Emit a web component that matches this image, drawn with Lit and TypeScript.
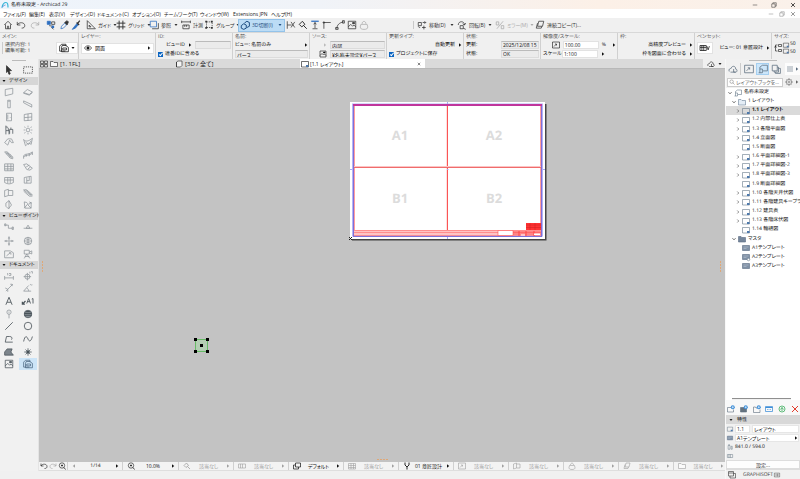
import { LitElement, html, css, svg, nothing, TemplateResult } from "lit";
import { customElement, property } from "lit/decorators.js";
import { classMap } from "lit/directives/class-map.js";

/* Line icons on a 16 x 16 grid; "fill" paths are solid, the rest are stroked. */
const ICONS: Record<string, TemplateResult> = {
  logo: svg`<path d="M2 13C3 7 6 3 10 3c3 0 4 3 4 10" stroke="#38b6d8" stroke-width="2.4"/><path d="M2 13c2-3 4-4 7-5" stroke="#4a7fd0" stroke-width="1.6"/>`,
  home: svg`<path d="M2 8l6-6 6 6M4 7v7h8V7M7 14v-4h2v4"/>`,
  undo: svg`<path d="M2 3v5h5M2 8c2-5 12-5 12 1 0 3-2 4-5 4"/>`,
  redo: svg`<path d="M14 3v5H9M14 8C12 3 2 3 2 9c0 3 2 4 5 4"/>`,
  pick: svg`<path d="M2 2h5v5H2z" fill="#2e6fc0" stroke="#2e6fc0"/><path d="M9 3h5v4H9zM5 9l6 1-2 2 3 3"/><path d="M9 9h4v4H9z" fill="#2e6fc0" stroke="none"/>`,
  dropper: svg`<path d="M3 14l1-4 5-5 3 3-5 5z" stroke="#2e6fc0"/><path d="M9 4l4 4 2-5-2-2z" fill="currentColor"/>`,
  syringe: svg`<path d="M2 15l3-4 5-6 2 2-5 6z" fill="#2e6fc0" stroke="#2e6fc0"/><path d="M9 4l4 4M11 5l3-4" stroke-width="2"/>`,
  triangle: svg`<path d="M2 1v13h13zM5 8v3h3z"/>`,
  grid: svg`<path d="M5 1v14M11 1v14M1 5h14M1 11h14" stroke-width="1.5"/>`,
  trace: svg`<path d="M2 2h10v9H2z" stroke="#2e6fc0"/><path d="M5 14h10V5" />`,
  measure: svg`<path d="M1 3h14M1 1v4M15 1v4M3 8h10v6H3zM6 8v3M9 8v3"/>`,
  group: svg`<path d="M4 3h9v9H4z" stroke-dasharray="2 1.5"/><path d="M2 1h3v3H2zM11 1h3v3h-3zM2 11h3v3H2zM11 11h3v3h-3z" fill="currentColor" stroke="none"/>`,
  cube: svg`<path d="M2 9l4-3 4 2v5l-4 2-4-2zM7 5l4-3 4 2v6l-4 2" stroke-width="1.6"/>`,
  trim: svg`<path d="M2 2v12M2 8h7M8 3l6 9M14 3L8 12"/>`,
  find: svg`<path d="M2 7l5-5 4 5-5 4zM9 9l5 5" stroke-width="1.6"/>`,
  ibeam: svg`<path d="M2 2h12" stroke="#2e6fc0" stroke-width="2"/><path d="M8 4v9M4 14h8M6 7l2-3 2 3"/>`,
  corner: svg`<path d="M3 14V4h11M1 4h4M3 2v4"/>`,
  arc: svg`<path d="M3 14C3 8 7 4 14 3M1 12h4v3H1zM12 1h3v4h-3z"/>`,
  image: svg`<path d="M2 2h12v12H2zM2 11l4-4 3 3 2-2 3 3"/><path d="M9 4h3v2H9z" fill="currentColor"/>`,
  bag: svg`<path d="M5 6c0-5 6-5 6 0M3 7h10l1 4c0 3-2 4-6 4s-6-1-6-4z"/>`,
  move: svg`<path d="M2 4h5v5H2zM8 12h6M11 9v6M5 12c-3 0-3-2-3-2" /><path d="M9 4h5M12 2l2 2-2 2"/>`,
  rotate: svg`<path d="M2 8c0-7 10-7 10 0M12 8l-3-2M12 8l2-3M5 9h5v5H5z"/><path d="M10 13l4 2"/>`,
  mirror: svg`<path d="M3 14L13 2M2 3h4v5H2zM10 9h4v5h-4z"/>`,
  copies: svg`<path d="M6 2h8l-2 8H4zM4 5L2 13h8l1-3"/>`,
  sheet: svg`<path d="M1 3h14v11H1z"/><path d="M10 10h5v4h-5z" fill="#4d79ad" stroke="none"/>`,
  sheetTool: svg`<path d="M1 5l3-3h7v3M1 5v8h9M5 4h6l4 3v7H4V7zM6 8h6v3H6z"/>`,
  eye: svg`<path d="M1 8c3-6 11-6 14 0-3 6-11 6-14 0z"/><circle cx="8" cy="8" r="2.4" fill="currentColor"/>`,
  folder: svg`<path d="M1 13V3h5l2 2h7v8z" fill="#fafafa"/>`,
  folderFull: svg`<path d="M1 14V3h5l2 2h7v9z" fill="#75869b" stroke="#5a6c83"/>`,
  folderBlue: svg`<path d="M1 14V3h5l2 2h7v9z" fill="#e4edf6" stroke="#6b8199"/>`,
  master: svg`<path d="M1 3h14v10H1z" fill="#7f91a6" stroke="#5a6c83"/><path d="M3 6h10M3 9h6" stroke="#b9c5d2"/>`,
  masterLinked: svg`<path d="M1 3h14v10H1z" fill="#7f91a6" stroke="#5a6c83"/><path d="M3 6h10M3 9h6" stroke="#b9c5d2"/><circle cx="13" cy="13" r="2.500" fill="#fff"/>`,
  quad: svg`<path d="M1 2h6v5H1zM9 2h6v5H9zM1 9h6v5H1zM9 9h6v5H9z"/>`,
  box: svg`<path d="M3 4l3-2h8v9l-3 3H3zM3 4v10" fill="#f4f4f4"/>`,
  cloud: svg`<path d="M2 12c-2-4 2-5 3-5 1-5 8-4 7 1 3 0 3 4 1 5H4"/><path d="M9 8v5h3"/>`,
  frame: svg`<path d="M1 2h14v12H1zM4 11l5-5M6 6h3v3" />`,
  pen: svg`<path d="M0 4h10v8H0zM0 7h10M3 4v8M6 4v8M11 5l2 6 2-6"/>`,
  link: svg`<path d="M7 2H3v12h4M1 7l2-3 2 3M9 1h6v4H9zM9 11h6v4H9z"/>`,
  cursor: svg`<path d="M4 1l8 8H8l2 5-2 1-2-5-2 2z" fill="currentColor"/>`,
  marquee: svg`<path d="M1 3h14v10H1z" stroke-dasharray="2 1.4"/>`,
  wall: svg`<path d="M2 4l12-2v9L2 14z"/>`,
  slab: svg`<path d="M1 9l6-5 8 4-5 4zM1 9v1l9 3 5-4"/>`,
  column: svg`<path d="M6 2h4v12H6zM6 3c1 1 3 1 4 0"/>`,
  beam: svg`<path d="M1 3l13 6v4L1 6z"/>`,
  door: svg`<path d="M4 2h8v12H4zM6 4v8M10 8v1"/>`,
  window: svg`<path d="M2 4l12-2v11L2 14zM8 3v11M2 9l12-1"/>`,
  chair: svg`<path d="M3 1v8h5v6M3 9v6M3 3c4 0 4 2 4 6M9 7h5v7M9 7v7M11 4v3"/>`,
  lamp: svg`<circle cx="8" cy="8" r="3"/><path d="M8 1v2M8 13v2M1 8h2M13 8h2M2 3l2 1M14 3l-2 1M2 13l2-1M14 13l-2-1"/>`,
  roof: svg`<path d="M1 9l5-6h6l3 6h-3l-3-4-3 8z"/>`,
  shell: svg`<path d="M1 4c3 4 8 3 14-2l-2 10c-4-4-5-1-9 2zM4 8l5 4 4-6"/>`,
  stair: svg`<path d="M1 3h4l9 8v3l-4-1zM4 3l8 9M3 6h5M6 8h5M8 11h5"/>`,
  rail: svg`<path d="M1 9c3-4 9-1 14-6M1 9v5M5 7v4M10 6v4M15 3v5M1 11c3-4 9-1 14-6"/>`,
  curtain: svg`<path d="M1 3h14v11H1zM6 3v11M11 3v11M1 7h14M1 11h14"/>`,
  mesh: svg`<path d="M1 4l5-1 9 7-4 3-5-1zM5 8l5-3M8 11l4-3"/>`,
  skylight: svg`<path d="M1 4h14v8c-5 3-9 3-14 0zM6 4v9M10 4v9M1 8h14"/>`,
  opening: svg`<path d="M2 4l11-2v11H2zM6 4v9M10 3v6H6"/>`,
  zone: svg`<path d="M1 4l6-2v10l-6 2zM7 4h7v8H7"/>`,
  ramp: svg`<path d="M1 3h5l9 8h-4zM4 3l9 8M1 5l9 8h5"/>`,
  morph: svg`<path d="M8 1L3 5v5l4 4 5-6zM8 1v13"/>`,
  object: svg`<path d="M2 3l4 1 3 3 4-3v9H3zM2 13l5-6 6 6M10 3l4 2"/>`,
  section: svg`<path d="M2 5h5v5h7M1 3h2v3H1zM13 8h2v4h-2z"/>`,
  elevation: svg`<path d="M1 10h14M5 10l3-5 3 5z"/>`,
  interior: svg`<circle cx="8" cy="8" r="2"/><path d="M8 1l-1 3h2zM8 15l-1-3h2zM1 8l3-1v2zM15 8l-3-1v2z"/>`,
  globe: svg`<circle cx="8" cy="8" r="6"/><path d="M2 8h12M8 2v12M4 4c3 2 5 2 8 0M4 12c3-2 5-2 8 0"/>`,
  detail: svg`<path d="M1 3h9l5 3v8H1zM4 11l6-5M8 6h3v3"/>`,
  camera: svg`<path d="M2 2h8v6H2zM10 5l4-2v5l-4-2M6 8l-4 7M6 8l5 7M3 12h7"/>`,
  dim: svg`<path d="M1 11h14M1 8v6M15 8v6M5 4h1v3M8 4h3v3H8"/>`,
  level: svg`<circle cx="7" cy="9" r="4"/><path d="M7 3v12M1 9h12M11 1v3M13 1h2v3"/>`,
  radial: svg`<path d="M2 8l4 2 8-8M6 10v4M6 10l-3 3M10 2h3v3"/>`,
  angle: svg`<path d="M1 13h12M1 13l8-9M6 8c2 1 3 3 3 5M11 3c2-2 3 2 4 0"/>`,
  textA: svg`<path d="M3 14L8 2l5 12M5 10h6" stroke-width="1.4"/>`,
  label: svg`<path d="M-1 13l5-5M-1 9v4h4" stroke-width="2"/><path d="M6 12l3-8 3 8M7 9h4M14 5l2-1v8" stroke-width="1.4"/>`,
  pin: svg`<circle cx="8" cy="5" r="3.4"/><path d="M8 8v7M7 5h2"/>`,
  hatch: svg`<circle cx="8" cy="8" r="6" fill="#8a9299"/><path d="M2 7h12M2 10h12M5 4h6" stroke-width="1.8"/>`,
  line: svg`<path d="M2 14L14 2" stroke-width="1.3"/>`,
  circle: svg`<circle cx="8" cy="8" r="6" stroke-width="1.3"/>`,
  poly: svg`<path d="M14 13H2l2-9h5c3 0 5 2 3 5" stroke-width="1.3"/>`,
  spline: svg`<path d="M1 12C3 2 6 3 8 8s5 4 7-4" stroke-width="1.3"/>`,
  fill: svg`<path d="M1 13V8l4-5h8l-2 5 4 5z" fill="#7d858c"/>`,
  star: svg`<path d="M8 2v12M2 8h12M4 4l8 8M12 4l-8 8"/><circle cx="8" cy="8" r="2" fill="currentColor"/>`,
  search: svg`<circle cx="7" cy="7" r="4.6"/><path d="M10 10l5 5"/>`,
  zoomIn: svg`<circle cx="8" cy="7" r="5.4"/><path d="M12 11l3 4M8 5v4M6 7h4" stroke-width="1.5"/>`,
  gear: svg`<circle cx="8" cy="8" r="5.4"/><circle cx="8" cy="8" r="2"/><path d="M8 0v3M8 13v3M0 8h3M13 8h3M3 3l1 1M13 3l-1 1M3 13l1-1M13 13l-1-1"/>`,
  menu: svg`<path d="M2 4h12M2 8h12M2 12h12"/>`,
  pages: svg`<path d="M2 2h8v9H2zM5 11v2h7V5h-2M7 13v2h8V7h-3"/>`,
  book: svg`<path d="M3 14V5l4-3h8v9H8M1 14h6V8H3"/>`,
  addSheet: svg`<path d="M1 5h8M1 5v9h12V9"/><circle cx="11.500" cy="4.500" r="4" fill="#3f8fd8" stroke="none"/><path d="M9.500 4.500h4M11.500 2.500v4" stroke="#fff"/>`,
  addMaster: svg`<path d="M1 5h12v9H1z" fill="#64727f"/><circle cx="11.500" cy="4.500" r="4" fill="#3f8fd8" stroke="none"/><path d="M9.500 4.500h4M11.500 2.500v4" stroke="#fff"/>`,
  addFolder: svg`<path d="M8 6H6L5 4H1v11h13V9"/><circle cx="11.500" cy="4.500" r="4" fill="#3f8fd8" stroke="none"/><path d="M9.500 4.500h4M11.500 2.500v4" stroke="#fff"/>`,
  card: svg`<path d="M1 3h14v10H1z" stroke="#3f8fd8" stroke-width="1.5"/><path d="M1 5h14" stroke="#3f8fd8" stroke-width="2"/><path d="M4 9h3M9 9h3" stroke="#3f8fd8"/>`,
  refresh: svg`<circle cx="8" cy="8" r="6" stroke="#3fae60" stroke-width="1.6"/><path d="M5 9l3-4 3 4M8 5v7" stroke="#3fae60" stroke-width="1.6"/>`,
  cross: svg`<path d="M2 2l12 12M14 2L2 14" stroke="#e23c2c" stroke-width="2"/>`,
  size: svg`<path d="M3 4h5v10H3zM3 2h5M11 6h3v8h-3z"/>`,
  split: svg`<path d="M1 4h14v8H1zM5 4v8M9 4v8"/>`,
  windows: svg`<path d="M1 1h10v9H1zM4 10v4h11V5h-4M1 4h10"/>`,
  badge: svg`<path d="M1 3h14v10H1zM5 6v4M8 6v4h2c2 0 2-4 0-4z"/>`,
  layers: svg`<path d="M5 2h10v8H5zM1 6v8h10v-4M5 6H1" stroke-width="1.4"/>`,
  forkPen: svg`<path d="M4 1v5l4 4 4-4V1M8 10v5" stroke-width="1.8"/>`,
  min: svg`<path d="M2 8h12"/>`,
  restore: svg`<path d="M2 5h9v9H2zM5 5V2h9v9h-3"/>`,
  close: svg`<path d="M3 3l10 10M13 3L3 13" stroke-width="2"/>`,
  down: svg`<path d="M2 4h12l-6 8z" fill="currentColor" stroke="none"/>`,
  right: svg`<path d="M4 1l9 7-9 7z" fill="currentColor" stroke="none"/>`,
  left: svg`<path d="M12 1L3 8l9 7z" fill="currentColor" stroke="none"/>`,
  chevR: svg`<path d="M5 2l6 6-6 6" stroke-width="2.4"/>`,
  chevD: svg`<path d="M2 5l6 6 6-6" stroke-width="3.4"/>`,
};

const iconStyles = css`
  svg.i { display: block; flex: none; width: 10px; height: 10px; fill: none; stroke: currentColor; stroke-width: 1.2; overflow: visible; }
  svg.i.s4 { width: 4px; height: 4px; }
  svg.i.s6 { width: 6px; height: 6px; }
  svg.i.s8 { width: 8px; height: 8px; }
`;
const ic = (name: string, size = 10) =>
  html`<svg class="i s${size}" viewBox="0 0 16 16" aria-hidden="true">${ICONS[name]}</svg>`;

const base = css`
  * { box-sizing: border-box; }
  button, input, select { font: inherit; color: inherit; margin: 0; padding: 0; border: 0; background: none; border-radius: 0; min-width: 0; outline: 0; }
  button { display: flex; align-items: center; white-space: nowrap; }
  select { appearance: none; }
  input[type="checkbox"] { appearance: none; flex: none; width: 5px; height: 5px; background: #0a64c2; display: grid; place-items: center; }
  input[type="checkbox"]::after { content: ""; width: 1px; height: 3px; border-right: 1px solid #fff; border-bottom: 1px solid #fff; transform: rotate(40deg); }
`;

@customElement("title-bar")
class TitleBar extends LitElement {
  static styles = [base, iconStyles, css`
    :host { display: block; flex: none; }
    .title { display: flex; align-items: center; height: 9px; padding: 0 3px 0 1px; gap: 2px; background: linear-gradient(90deg, #eef4fb, #f0f3f8 40%, #fcf0e7 75%, #faf1ea); color: #111; }
    .win { display: flex; margin-left: auto; gap: 13px; padding-right: 1px; }
    .menu { display: grid; grid-template-columns: 26px 20px 21px 27px 35px 32px 36px 33px 38px 1fr auto; align-items: center; height: 9px; background: #fff; padding-left: 3px; color: #222; }
    .menu .win { gap: 5px; padding-right: 4px; color: #777; }
  `];
  render() {
    const win = ["min", "restore", "close"];
    return html`
      <header class="title">${ic("logo", 8)}<span>名称未設定 - Archicad 29</span>
        <span class="win">${win.map((n) => html`<button aria-label=${n}>${ic(n, 6)}</button>`)}</span>
      </header>
      <nav class="menu">
        ${["ファイル(F)", "編集(E)", "表示(V)", "デザイン(D)", "ドキュメント(C)", "オプション(O)", "チームワーク(T)", "ウィンドウ(W)", "Extensions JPN", "ヘルプ(H)"].map((t) => html`<button>${t}</button>`)}
        <span class="win">${win.map((n) => html`<button aria-label=${n}>${ic(n, 6)}</button>`)}</span>
      </nav>`;
  }
}

@customElement("tool-bar")
class ToolBar extends LitElement {
  static styles = [base, iconStyles, css`
    :host { display: grid; grid-template-columns: 13px 14px 16px 13px 12px 15px 30px 33px 32px 23px 35px 47px 12px 12px 12px 13px 12px 12px 12px 46px 40px 38px 40px auto; align-items: center; height: 14px; flex: none; padding-left: 2px; background: #f0f0f0; border-bottom: 1px solid #d8d8d8; color: #333; }
    button { gap: 2px; height: 13px; padding-left: 1px; }
    button.grouped { padding-right: 2px; }
    .grouped .i:last-child { margin-left: auto; }
    .on { background: #bcdcf5; border: 1px solid #93c3ea; color: #1f4f82; }
    .gray { color: #aaa; }
    .gap { border-right: 1px solid #c8c8c8; height: 8px; margin-right: 2px; }
  `];
  render() {
    const b = (icon: string, label = "", arrow = false, cls = "") =>
      html`<button class="${cls} ${arrow ? "grouped" : ""}" aria-label=${label || icon}>${ic(icon)}${label ? html`<span>${label}</span>` : nothing}${arrow ? ic("down", 4) : nothing}</button>`;
    return html`
      ${b("home")}${b("undo")}${b("redo", "", false, "gray")}${b("pick")}${b("dropper")}${b("syringe")}
      ${b("triangle", "ガイド", true)}${b("grid", "グリッド", true)}${b("trace", "参照", true)}${b("measure", "計測")}${b("group", "グループ", true)}
      ${b("cube", "3D切断(I)", true, "on")}
      ${b("trim")}${b("find")}${b("ibeam")}${b("corner")}${b("arc")}${b("image")}${b("bag", "", false, "gray")}
      <span class="gap"></span>
      ${b("move", "移動(D)", true)}${b("rotate", "回転(B)", true)}${b("mirror", "ミラー(M)", true, "gray")}${b("copies", "連続コピー(T)...")}`;
  }
}

@customElement("info-box")
class InfoBox extends LitElement {
  static styles = [base, iconStyles, css`
    :host { display: grid; grid-template-columns: 79px repeat(9, 77px) minmax(24px, 1fr); height: 26px; flex: none; background: #f0f0f0; overflow: hidden; color: #111; }
    section { display: flex; flex-direction: column; padding: 1px 1px 0 2px; border-right: 1px solid #d0d0d0; gap: 1px; min-width: 0; overflow: hidden; white-space: nowrap; }
    h2 { margin: 0; font-size: 5px; line-height: 6px; font-weight: 400; color: #555; }
    .row { display: flex; align-items: center; height: 8px; gap: 3px; }
    .row > label { display: flex; align-items: center; gap: 2px; }
    .end { justify-content: flex-end; }
    .tall { height: 14px; }
    .push { margin-left: auto; }
    .field { background: #ebebeb; border: 1px solid #dcdcdc; border-top-color: #bbb; height: 8px; flex: 1; padding-left: 1px; line-height: 6px; }
    .white { background: #fff; border: 1px solid #e2e2e2; }
    .narrow { flex: none; width: 36px; }
    .mid { flex: none; width: 55px; }
    .date { flex: none; width: 38px; }
    .drop { flex: 1; height: 11px; padding: 0 2px; gap: 3px; }
    .big { height: 12px; padding: 0 2px; gap: 2px; }
    .small { line-height: 6px; color: #444; border-left: 1px solid #ccc; padding-left: 2px; }
    .tight { gap: 1px; }
    .dim { color: #bbb; }
    .scale { width: 16px; }
    section:last-child { border: 0; }
    section:first-child { padding-right: 0; }
  `];
  render() {
    const arrow = (cls = "") => html`<button class=${cls} aria-label="選択">${ic("right", 4)}</button>`;
    return html`
      <section><h2>メイン:</h2><div class="row tall"><span class="small">選択内容: 1<br>編集可能: 1</span><button class="white big push" aria-label="図面ツール">${ic("sheetTool")}${ic("down", 4)}</button></div></section>
      <section><h2>レイヤー:</h2><div class="row tall"><button class="white drop">${ic("eye", 8)}図面<span class="push">${ic("right", 4)}</span></button></div></section>
      <section><h2>ID:</h2><div class="row end"><label for="vid">ビューID</label>${arrow()}<input id="vid" class="field narrow"></div><div class="row"><label><input type="checkbox" checked>連番IDに含める</label></div></section>
      <section><h2>名前:</h2><div class="row"><label for="nm">ビュー: 名前のみ</label>${arrow("push")}</div><div class="row"><input id="nm" class="field" value="パース"></div></section>
      <section><h2>ソース:</h2><div class="row end">${arrow("dim")}<input class="field mid" aria-label="ソース" value="内部"></div><div class="row end">${ic("image", 8)}<input class="field mid" aria-label="パス" value="¥名称未設定¥パース"></div></section>
      <section><h2>更新タイプ:</h2><div class="row end">自動更新${arrow()}</div><div class="row"><label><input type="checkbox" checked>プロジェクトに保存</label></div></section>
      <section><h2>状態:</h2><div class="row"><label for="dt">更新:</label><input id="dt" class="field date push" value="2025/12/08 15"></div><div class="row"><label for="st">状態:</label><input id="st" class="field date push" value="OK"></div></section>
      <section><h2>解像度/スケール:</h2><div class="row end">${ic("frame", 8)}<input class="field white narrow" aria-label="解像度" value="100.00">%<span></span>${arrow()}</div><div class="row"><label class="scale" for="sc">スケール:</label><select id="sc" class="field white narrow"><option>1:100</option></select>${arrow()}</div></section>
      <section><h2>枠:</h2><div class="row end">高精度プレビュー${arrow()}</div><div class="row end">枠を図面に合わせる${arrow()}</div></section>
      <section><h2>ペンセット:</h2><div class="row tall"><button class="white big" aria-label="ペン">${ic("pen")}</button><span class="push">ビュー: 01 意匠設計</span>${arrow()}</div></section>
      <section><h2>サイズ:</h2><div class="row tall tight">${ic("link", 8)}<span>${ic("sheet", 6)}${ic("sheet", 6)}</span><span>50<br>50</span></div></section>`;
  }
}

@customElement("tool-box")
class ToolBox extends LitElement {
  static styles = [base, iconStyles, css`
    :host { display: block; width: 38px; flex: none; background: #f1f1f1; border-right: 1px solid #e4e4e4; color: #8d9499; }
    .grip { width: 14px; height: 1px; margin: 1px auto 2px; background: #bbb; }
    .tools { display: grid; grid-template-columns: 1fr 1fr; grid-auto-rows: 12px; align-content: space-evenly; padding-right: 1px; }
    .first { height: 14px; color: #333; }
    .design { height: 127px; }
    .view { height: 41px; }
    .doc { height: 102px; }
    button { justify-content: center; }
    h2 { display: flex; align-items: center; gap: 3px; height: 8px; margin: 0; padding-left: 2px; background: #d6d6d6; color: #111; font-size: 5px; font-weight: 400; white-space: nowrap; }
    .dark { color: #4a5359; }
    .on { background: #cce4f7; color: #4a6680; }
  `];
  render() {
    const dark = new Set(["chair", "textA", "label", "hatch", "line", "circle", "poly", "spline", "fill", "star", "image"]);
    const group = (cls: string, names: string[]) => html`<div class="tools ${cls}">${names.map((n) =>
      html`<button aria-label=${n} class=${classMap({ dark: dark.has(n), on: n === "sheetTool" })}>${ic(n)}</button>`)}</div>`;
    const head = (t: string) => html`<h2>${ic("down", 4)}${t}</h2>`;
    return html`<div class="grip"></div>
      ${group("first", ["cursor", "marquee"])}
      ${head("デザイン")}${group("design", ["wall", "slab", "column", "beam", "door", "window", "chair", "lamp", "roof", "shell", "stair", "rail", "curtain", "mesh", "skylight", "opening", "zone", "ramp", "morph", "object"])}
      ${head("ビューポイント")}${group("view", ["section", "elevation", "interior", "globe", "detail", "camera"])}
      ${head("ドキュメント")}${group("doc", ["dim", "level", "radial", "angle", "textA", "label", "pin", "hatch", "line", "circle", "poly", "spline", "fill", "star", "image", "sheetTool"])}`;
  }
}

@customElement("work-area")
class WorkArea extends LitElement {
  static styles = [base, iconStyles, css`
    :host { display: flex; flex-direction: column; flex: 1; min-width: 0; }
    .tabs { display: grid; grid-template-columns: 136px 125px 125px 1fr 22px; height: 9px; background: #dadada; color: #222; }
    .tab { gap: 2px; font-size: 6px; }
    .pair { padding-left: 1px; }
    .tab.active { background: #fff; padding: 0 4px 0 1px; color: #111; gap: 1px; font-size: 5px; }
    .active .end { margin-left: auto; }
    .drop { grid-column: 5; background: #f0f0f0; justify-content: center; gap: 3px; }
    .canvas { position: relative; flex: 1; background: #c3c3c3; overflow: hidden; border-top: 1px solid #b8b8b8; }
    .sheet { position: absolute; left: 309px; top: 31px; width: 200px; height: 144px; }
    .sheet text { font: 700 13px "Open Sans", "Noto Sans", sans-serif; fill: #dcdcdc; text-anchor: middle; }
    .mark { position: absolute; left: 154px; top: 268px; width: 16px; height: 16px; }
    .edge { position: absolute; top: 192px; width: 1px; height: 11px; background: repeating-linear-gradient(#dfa878 0 2px, #c3c3c3 2px 3px); }
    .l { left: 3px; }
    .r { right: 4px; }
    .b { position: absolute; left: 338px; bottom: 2px; width: 11px; height: 1px; background: repeating-linear-gradient(90deg, #dfa878 0 2px, #c3c3c3 2px 3px); }
  `];
  render() {
    return html`
      <nav class="tabs">
        <button class="tab pair">${ic("quad", 8)}${ic("folder", 8)}[1. 1FL]</button>
        <button class="tab">${ic("box", 8)}[3D / 全て]</button>
        <button class="tab active">${ic("sheet", 8)}[1.1 レイアウト]<span class="end">${ic("close", 4)}</span></button>
        <button class="drop" aria-label="クラウド">${ic("cloud", 8)}${ic("down", 4)}</button>
      </nav>
      <div class="canvas">
        <svg class="sheet" viewBox="0 0 200 144" fill="none">
          <path d="M4 139.500H197.500V4" stroke="#444" stroke-width="2"/>
          <path d="M2 2h195v137H2z" fill="#fff"/>
          <path d="M5 4.500h189v131H5z" stroke="#b4b4f6" stroke-width="2"/>
          <path d="M5.500 136V5M193.500 5v131M5 136.500h189" stroke="#7f6fd8"/>
          <path d="M5 5h189" stroke="#c0359c" stroke-width="2"/>
          <path d="M6.500 6v129M192.500 6v129" stroke="#ff9d9d"/>
          <path d="M99.500 6v124" stroke="#fb5555"/><path d="M98.500 6v124" stroke="#fde0e0"/>
          <path d="M6 67.500h187" stroke="#f06c6c"/><path d="M6 66.500h187" stroke="#fbc4c4"/>
          <path d="M6 130h187v5.500H6z" fill="#ffc4c4"/>
          <path d="M6 130.500h187M6 132.500h187M6 135.500h187" stroke="#f77" stroke-width=".7"/>
          <path d="M178 123h15v7h-15z" fill="#f33"/>
          <path d="M178 125h15M178 127.500h15M182 123v7M187 123v7" stroke="#c22" stroke-width=".5"/>
          <path d="M150 130.500h15v5h-15z" fill="#fff" stroke="#f55" stroke-width=".6"/>
          <path d="M165 132h28M165 134h28M171 131v5M178 131v5M186 131v5" stroke="#f44" stroke-width="1"/>
          <path d="M186 133.500h6v1.500h-6zM173 134.500h4v1h-4z" fill="#fff"/>
          <path d="M99 69.500h1.500M2 69.500h2M195 69.500h2M99.500 2v2M99.500 137v2" stroke="#a8a8f4"/>
          <path d="M1 137l3 3M4 137l-3 3" stroke="#222"/>
          <text x="52" y="40">A1</text><text x="146" y="40">A2</text><text x="52" y="103">B1</text><text x="146" y="103">B2</text>
        </svg>
        <svg class="mark" viewBox="0 0 16 16"><path d="M2.500 2.500h12v12h-12z" fill="#b4ceb4" stroke="#67bb67"/><path d="M1 1h3v3H1zM13 1h3v3h-3zM1 13h3v3H1zM13 13h3v3h-3zM7 7h3v3H7z" fill="#000"/></svg>
        <i class="edge l"></i><i class="edge r"></i><i class="b"></i>
      </div>
      <status-strip></status-strip>`;
  }
}

@customElement("status-strip")
class StatusStrip extends LitElement {
  static styles = [base, iconStyles, css`
    :host { display: grid; grid-template-columns: 28px 55px 56px repeat(9, 55px) minmax(54px, 1fr); height: 9px; flex: none; background: #f3f3f3; color: #111; overflow: hidden; border-bottom: 1px solid #dedede; }
    .cell { display: flex; align-items: center; justify-content: space-between; padding: 0 3px 0 4px; border-left: 1px solid #d0d0d0; white-space: nowrap; }
    .cell:first-child { border: 0; padding: 0 1px; }
    .off { color: #a0a0a0; }
  `];
  render() {
    const cell = (icon: string, t = "該当なし", off = true) => html`<button class="cell ${off ? "off" : ""}">${ic(icon, 8)}${t}${ic("right", 4)}</button>`;
    return html`
      <span class="cell"><button aria-label="戻る">${ic("undo", 8)}</button><button class="off" aria-label="進む">${ic("redo", 8)}</button><button aria-label="ズーム">${ic("zoomIn", 8)}</button></span>
      <span class="cell"><button class="off" aria-label="前">${ic("left", 4)}</button>1/14<button aria-label="次">${ic("right", 4)}</button></span>
      ${cell("zoomIn", "10.0%", false)}${cell("find")}${cell("split")}${cell("layers", "デフォルト", false)}${cell("curtain")}
      ${cell("forkPen", "01 意匠設計", false)}${cell("frame")}${cell("zone")}${cell("bag")}${cell("copies")}${cell("folder")}`;
  }
}

type Node = { t: string; icon: string; depth: number; open?: boolean; leaf?: boolean; on?: boolean };

@customElement("layout-book")
class LayoutBook extends LitElement {
  @property({ attribute: false }) nodes: Node[] = [
    { t: "名称未設定", icon: "book", depth: 0, open: true },
    { t: "1 レイアウト", icon: "folderBlue", depth: 1, open: true },
    ...["1.1 レイアウト", "1.2 内部仕上表", "1.3 各階平面図", "1.4 立面図", "1.5 断面図", "1.6 平面詳細図-1", "1.7 平面詳細図-2", "1.8 平面詳細図-3", "1.9 断面詳細図", "1.10 各階天井伏図", "1.11 各階建具キープラ", "1.12 建具表", "1.13 各階床伏図", "1.14 軸組図"].map((t, i) => ({ t, icon: "sheet", depth: 2, leaf: [4, 8, 13].includes(i), on: i === 0 })),
    { t: "マスタ", icon: "folderFull", depth: 1, open: true },
    ...["A1テンプレート", "A2テンプレート", "A3テンプレート"].map((t, i) => ({ t, icon: i === 1 ? "masterLinked" : "master", depth: 2, leaf: true })),
  ];
  static styles = [base, iconStyles, css`
    :host { display: flex; flex-direction: column; width: 74px; flex: none; background: #f1f1f1; color: #222; border-left: 1px solid #f8f8f8; overflow: hidden; }
    .grip { width: 28px; height: 1px; margin: 1px auto 2px; background: #bbb; }
    .bar { display: grid; grid-template-columns: 15px 15px 13px 13px 1fr; height: 12px; align-items: center; color: #5a6b7c; flex: none; }
    .bar button { justify-content: center; height: 12px; }
    .bar button:first-child { border-right: 1px solid #ccc; }
    .bar .on { background: #cce6fa; outline: 1px solid #a5cff0; outline-offset: -1px; }
    .bar .white { background: #fcfcfc; gap: 1px; margin-left: 3px; }
    .find { display: flex; align-items: center; height: 13px; gap: 2px; padding: 1px 1px 0; color: #666; flex: none; }
    .find label { display: flex; align-items: center; gap: 1px; flex: 1; min-width: 0; height: 9px; background: #fff; border: 1px solid #ccc; padding-left: 1px; }
    .find input { width: 100%; }
    .find input::placeholder { color: #666; opacity: 1; }
    .find button { gap: 2px; }
    .list { flex: 1; background: #fff; min-height: 0; overflow: hidden; }
    ul { list-style: none; margin: 0; padding: 0; display: flex; flex-direction: column; justify-content: space-between; height: 183px; }
    li { display: flex; align-items: center; gap: 2px; height: 9px; padding-left: 2px; white-space: nowrap; line-height: 9px; color: #111; }
    li .i { color: #66788a; }
    .d1 { padding-left: 6px; }
    .d2 { padding-left: 10px; }
    li .i.s4 { color: #444; }
    .hide { visibility: hidden; }
    .sel { background: #dadada; font-weight: 700; }
    .line { height: 2px; margin: 0 9px 0 6px; background: #8f8f8f; border-bottom: 1px solid #f1f1f1; flex: none; }
    .wrap { background: #fff; flex: none; }
    .acts { display: flex; justify-content: space-between; align-items: center; height: 15px; padding: 2px 1px 0; color: #5a6b7c; background: #f8f8f8; }
    h2 { display: flex; align-items: center; gap: 4px; height: 9px; margin: 0; padding-left: 3px; background: #d8d8d8; font-size: 5px; font-weight: 400; flex: none; }
    .prop { display: flex; align-items: center; height: 9px; gap: 2px; padding: 0 1px; flex: none; color: #111; }
    .prop > .i { color: #5a6b7c; }
    .prop input, .prop button.f { background: #fff; height: 8px; padding-left: 1px; border: 1px solid #e6e6e6; line-height: 6px; }
    .num { width: 15px; }
    .name { flex: 1; }
    .f { flex: 1; justify-content: space-between; }
    .set { height: 9px; flex: none; justify-content: center; background: #fdfdfd; border: 1px solid #ddd; }
    footer { display: flex; align-items: center; height: 10px; gap: 7px; padding-left: 2px; color: #333; flex: none; white-space: nowrap; border-top: 1px solid #ddd; }
    footer span { display: flex; align-items: center; gap: 1px; }
  `];
  render() {
    return html`
      <div class="grip"></div>
      <div class="bar"><button aria-label="クラウド">${ic("cloud")}</button><button aria-label="ビュー一覧">${ic("frame")}</button><button class="on" aria-label="レイアウトブック">${ic("book")}</button><button aria-label="発行">${ic("pages")}</button><button class="white" aria-label="メニュー">${ic("menu", 8)}${ic("right", 4)}</button></div>
      <div class="find"><label>${ic("search", 6)}<input type="text" placeholder="レイアウトブックを..."></label><button aria-label="設定">${ic("gear", 8)}${ic("right", 4)}</button></div>
      <div class="list"><ul>${this.nodes.map((n) => html`<li class=${classMap({ d1: n.depth === 1, d2: n.depth === 2, sel: !!n.on })}>
        <span class=${classMap({ hide: !!n.leaf })}>${ic(n.open ? "chevD" : "chevR", 4)}</span>${ic(n.icon, 8)}<span>${n.t}</span></li>`)}</ul></div>
      <div class="wrap"><div class="line"></div>
      <div class="acts">${["addSheet", "addMaster", "addFolder", "card", "refresh", "cross"].map((n) => html`<button aria-label=${n}>${ic(n, 8)}</button>`)}</div></div>
      <h2>${ic("down", 4)}特性</h2>
      <div class="prop">${ic("sheet", 6)}<input class="num" aria-label="番号" value="1.1"><input class="name" aria-label="名前" value="レイアウト"></div>
      <div class="prop">${ic("master", 6)}<button class="f">A1テンプレート${ic("right", 4)}</button></div>
      <div class="prop">${ic("size", 6)}841.0 / 594.0</div>
      <div class="prop">${ic("split", 6)}</div>
      <button class="set">設定...</button>
      <footer>${ic("windows", 8)}<span>GRAPHISOFT ${ic("badge", 6)}</span></footer>`;
  }
}

@customElement("app-root")
class AppRoot extends LitElement {
  static styles = css`
    :host { display: flex; flex-direction: column; height: 100vh; overflow: hidden; background: #f0f0f0; font: 5px/8px "Open Sans", "Noto Sans CJK JP", sans-serif; font-feature-settings: "palt"; text-rendering: geometricPrecision; color: #222; }
    main { display: flex; flex: 1; min-height: 0; }
    .left { display: flex; flex: 1; min-width: 0; padding-bottom: 8px; }
  `;
  render() {
    return html`<title-bar></title-bar><tool-bar></tool-bar><info-box></info-box>
      <main><div class="left"><tool-box></tool-box><work-area></work-area></div><layout-book></layout-book></main>`;
  }
}
